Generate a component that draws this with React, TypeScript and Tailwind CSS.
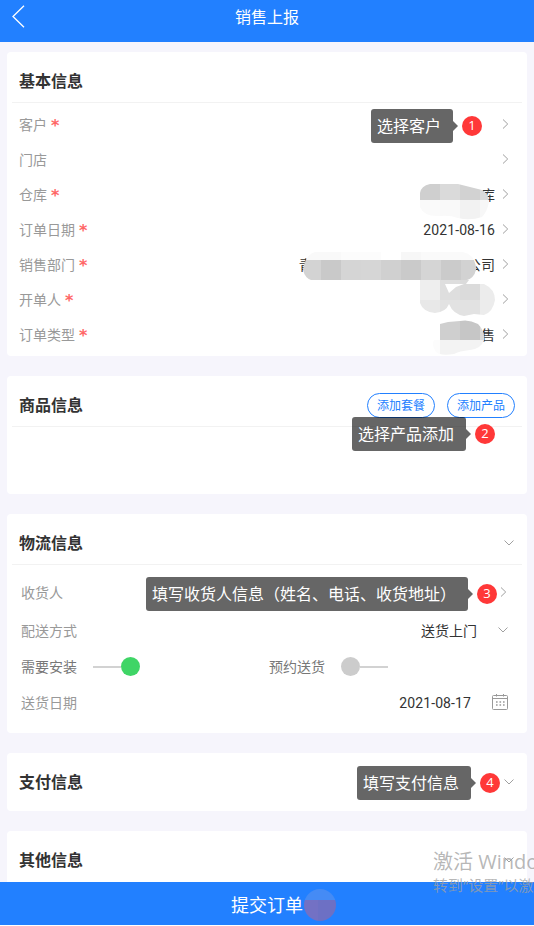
import type { ReactNode } from "react";
import clsx from "clsx";

type Cell = [x: number, y: number, w: number, h: number, fill: string];

type MosaicProps = {
  id: string;
  width: number;
  height: number;
  shape: string;
  cells: Cell[];
  className?: string;
};

// pixelated patch that covers private values
function Mosaic({ id, width, height, shape, cells, className }: MosaicProps) {
  return (
    <svg
      width={width}
      height={height}
      className={clsx("absolute", className)}
      shapeRendering="crispEdges"
    >
      <clipPath id={id}>
        <path d={shape} />
      </clipPath>
      <g clipPath={`url(#${id})`}>
        {cells.map(([x, y, w, h, fill]) => (
          <rect key={`${x}-${y}`} x={x} y={y} width={w} height={h} fill={fill} />
        ))}
      </g>
    </svg>
  );
}

function ChevronRight() {
  return (
    <svg width="7" height="10" viewBox="0 0 7 10" fill="none" stroke="#888" strokeWidth="0.8">
      <path d="M1 0.5L5.7 5L1 9.5" />
    </svg>
  );
}

function ChevronDown() {
  return (
    <svg width="10" height="6" viewBox="0 0 10 6" fill="none" stroke="#888" strokeWidth="0.8">
      <path d="M0.5 0.5L5 5L9.5 0.5" />
    </svg>
  );
}

function CalendarIcon() {
  return (
    <svg width="17" height="17" viewBox="0 0 17 17" fill="none" stroke="#999">
      <rect x="0.5" y="1.5" width="15" height="14" rx="1" />
      <path d="M0.5 4.5H15.5M4.5 0V2.5M11.5 0V2.5" />
      <path d="M4 8H13M4 11H13" strokeWidth="1.4" strokeDasharray="1.6 1.9" />
    </svg>
  );
}

function Callout({ step, text, className }: { step: number; text: string; className: string }) {
  return (
    <div className={clsx("absolute z-10 flex items-center whitespace-nowrap", className)}>
      <div className="h-[34px] rounded-[3px] bg-black/60 pr-3 pl-1.5 text-base leading-9 text-white">
        {text}
      </div>
      <svg width="5" height="10" viewBox="0 0 5 10">
        <path d="M0 0L5 5L0 10Z" fill="#666" />
      </svg>
      <span className="ml-1 flex size-5 items-center justify-center rounded-full bg-[#ff3838] pb-px font-['Open_Sans'] text-[13px] leading-none text-white">
        {step}
      </span>
    </div>
  );
}

function Card({
  title,
  extra,
  divider = true,
  className,
  children,
}: {
  title: string;
  extra?: ReactNode;
  divider?: boolean;
  className?: string;
  children?: ReactNode;
}) {
  return (
    <section className={clsx("relative shrink-0 rounded bg-white px-[5px]", className)}>
      <div
        className={clsx(
          "flex items-center justify-between px-[7px]",
          divider ? "h-[51px] border-b border-[#f2f2f2] pt-2" : "h-[58px]"
        )}
      >
        <h2 className="pt-0.5 text-base font-bold text-[#333]">{title}</h2>
        {extra}
      </div>
      {children}
    </section>
  );
}

type Field = {
  label: string;
  required?: boolean;
  value?: ReactNode;
};

const basicFields: Field[] = [
  { label: "客户", required: true },
  { label: "门店" },
  {
    label: "仓库",
    required: true,
    value: (
      <>
        库
        <Mosaic
          id="warehouse"
          width={69}
          height={36}
          className="top-[7px] right-[6px]"
          shape="M0 9Q1 2 10 0H38Q50 3 62 6Q69 10 69 18Q67 28 62 33Q50 37 38 34Q30 31 20 32Q4 33 0 23Z"
          cells={[
            [0, 0, 20, 16, "#cfcfcf"],
            [20, 0, 20, 16, "#dadada"],
            [40, 0, 20, 16, "#d2d2d2"],
            [60, 0, 9, 16, "#d9d9d9"],
            [0, 16, 20, 20, "#fafafa"],
            [20, 16, 20, 20, "#f9f9f9"],
            [40, 16, 20, 20, "#f2f2f2"],
            [60, 16, 9, 20, "#f7f7f7"],
          ]}
        />
      </>
    ),
  },
  { label: "订单日期", required: true, value: "2021-08-16" },
  {
    label: "销售部门",
    required: true,
    value: (
      <>
        <span className="mr-[154px]">青</span>公司
        <Mosaic
          id="department"
          width={173}
          height={28}
          className="top-[5px] right-[19px]"
          shape="M0 18Q2 3 12 0H160Q173 3 173 18Q171 26 164 28H8Q2 26 0 18Z"
          cells={[
            [0, 0, 38, 8, "#f9f9f9"],
            [38, 0, 40, 8, "#fcfcfc"],
            [78, 0, 20, 8, "#fff"],
            [98, 0, 20, 8, "#f7f7f7"],
            [118, 0, 55, 8, "#fafafa"],
            [0, 8, 18, 20, "#d3d3d3"],
            [18, 8, 20, 20, "#c9c9c9"],
            [38, 8, 20, 20, "#d5d5d5"],
            [58, 8, 20, 20, "#d6d6d6"],
            [78, 8, 20, 20, "#d0d0d0"],
            [98, 8, 20, 20, "#cacaca"],
            [118, 8, 20, 20, "#d5d5d5"],
            [138, 8, 20, 20, "#cbcbcb"],
            [158, 8, 15, 20, "#d2d2d2"],
          ]}
        />
      </>
    ),
  },
  {
    label: "开单人",
    required: true,
    value: (
      <Mosaic
        id="creator"
        width={75}
        height={36}
        className="top-[-2px] right-0"
        shape="M0 0H49L46 4H25L29 13L36 7L44 4H64Q75 9 75 20Q73 32 64 35L54 34L44 36Q33 34 29 24Q26 32 15 33Q3 32 0 23Z"
        cells={[
          [0, 0, 20, 20, "#eeeeee"],
          [20, 0, 20, 20, "#dedede"],
          [40, 0, 20, 20, "#dbdbdb"],
          [60, 0, 15, 20, "#ececec"],
          [0, 20, 20, 16, "#e8e8e8"],
          [20, 20, 40, 16, "#e2e2e2"],
          [60, 20, 15, 16, "#ececec"],
        ]}
      />
    ),
  },
  {
    label: "订单类型",
    required: true,
    value: (
      <>
        售
        <Mosaic
          id="order-type"
          width={53}
          height={35}
          className="top-[3px] right-[10px]"
          shape="M8 4L16 2L28 1Q37-1 46 4Q53 11 52 20Q49 29 38 30Q27 31 22 34Q8 36 4 32Q-1 26 2 20L8 18Z"
          cells={[
            [8, 0, 20, 20, "#cfcfcf"],
            [28, 0, 20, 20, "#c6c6c6"],
            [48, 0, 5, 20, "#d9d9d9"],
            [0, 20, 8, 15, "#fcfcfc"],
            [8, 20, 45, 15, "#f3f3f3"],
          ]}
        />
      </>
    ),
  },
];

function FieldRow({ label, required, value }: Field) {
  return (
    <div className="flex h-[35px] items-center justify-between pr-[13px] pl-[7px] text-sm">
      <span className="flex items-center text-[#999]">
        {label}
        {required && (
          <span className="ml-1 pt-0.5 font-['DejaVu_Sans'] text-base leading-none font-bold text-[#ff6666]">*</span>
        )}
      </span>
      <span className="flex h-full items-center">
        <span className="relative flex h-full items-center tracking-[0.1px] text-[#333]">{value}</span>
        <span className="ml-[7px] pb-0.5">
          <ChevronRight />
        </span>
      </span>
    </div>
  );
}

function Switch({ on }: { on?: boolean }) {
  return (
    <span className={clsx("mb-px flex w-[47px] items-center", on && "flex-row-reverse")}>
      <span className={clsx("size-[19px] rounded-full", on ? "bg-[#3fd566]" : "bg-[#ccc]")} />
      <span className="h-0.5 flex-1 bg-[#d2d2d2]" />
    </span>
  );
}

function PillButton({ children }: { children: ReactNode }) {
  return (
    <button className="h-[25px] w-[68px] rounded-full border border-[#2280ff] pt-px text-xs text-[#2280ff]">
      {children}
    </button>
  );
}

export default function App() {
  return (
    <div className="relative flex h-[926px] w-[534px] flex-col overflow-hidden bg-[#f6f5fc] font-[Roboto,'Noto_Sans_CJK_SC',sans-serif]">
      <header className="relative flex h-[42px] shrink-0 items-center justify-center bg-[#2280ff] pb-[7px] text-base text-white">
        <svg className="absolute top-[5px] left-3" width="13" height="23" viewBox="0 0 13 23" fill="none" stroke="#fff" strokeWidth="1.3">
          <path d="M12 0.8L1 11.5L12 22.2" />
        </svg>
        销售上报
      </header>

      <main className="flex min-h-0 flex-1 flex-col gap-5 overflow-hidden px-[7px] pt-2.5">
        <Card title="基本信息" className="h-[304px]">
          <div className="pt-1">
            {basicFields.map((field) => (
              <FieldRow key={field.label} {...field} />
            ))}
          </div>
          <Callout step={1} text="选择客户" className="top-[57px] right-[45px]" />
        </Card>

        <Card
          title="商品信息"
          className="h-[118px]"
          extra={
            <div className="flex gap-3">
              <PillButton>添加套餐</PillButton>
              <PillButton>添加产品</PillButton>
            </div>
          }
        >
          <Callout step={2} text="选择产品添加" className="top-[41px] right-8" />
        </Card>

        <Card title="物流信息" className="h-[219px]" extra={<span className="mr-px"><ChevronDown /></span>}>
          <div className="pt-[9px] pl-[9px] text-sm text-[#999]">
            <div className="flex h-[38px] items-center justify-between pr-[15px]">
              收货人
              <span className="pb-0.5"><ChevronRight /></span>
            </div>
            <div className="flex h-[38px] items-center justify-between pr-[14px]">
              配送方式
              <span className="flex items-center gap-[21px] text-[#333]">
                送货上门
                <span className="pb-0.5"><ChevronDown /></span>
              </span>
            </div>
            <div className="flex h-[34px] items-center text-[#777]">
              <span className="flex w-[248px] items-center gap-4">
                需要安装
                <Switch on />
              </span>
              <span className="flex items-center gap-4">
                预约送货
                <Switch />
              </span>
            </div>
            <div className="flex h-[38px] items-center justify-between pr-[13px]">
              送货日期
              <span className="flex items-center gap-[21px] tracking-[0.1px] text-[#333]">
                2021-08-17
                <span className="pb-0.5"><CalendarIcon /></span>
              </span>
            </div>
          </div>
          <Callout step={3} text="填写收货人信息（姓名、电话、收货地址）" className="top-[63px] right-[30px]" />
        </Card>

        <Card title="支付信息" divider={false} className="h-[58px]" extra={<span className="mr-px"><ChevronDown /></span>}>
          <Callout step={4} text="填写支付信息" className="top-[13px] right-[27px]" />
        </Card>

        <Card title="其他信息" divider={false} className="h-[58px]" extra={<span className="mr-px"><ChevronDown /></span>} />
      </main>

      <footer className="relative flex h-11 shrink-0 items-center border-b border-white bg-[#2280ff] pt-1 pl-[231px] text-lg text-white">
        提交订单
        <Mosaic
          id="cursor"
          width={32}
          height={32}
          className="top-[7px] left-[304px]"
          shape="M16 0A16 16 0 0 1 16 32A16 16 0 0 1 16 0Z"
          cells={[
            [0, 0, 32, 11, "#458bf5"],
            [0, 11, 14, 21, "#7371c4"],
            [14, 11, 18, 21, "#6d70c4"],
          ]}
        />
      </footer>

      <div className="pointer-events-none absolute top-[848px] left-[433px] w-[101px] overflow-hidden font-['Open_Sans','Noto_Sans_CJK_SC',sans-serif] whitespace-nowrap text-[#a0a0a0]/75">
        <p className="text-xl leading-7">激活 Windows</p>
        <p className="-mt-px text-[15px] leading-5">转到“设置”以激活</p>
      </div>
    </div>
  );
}
